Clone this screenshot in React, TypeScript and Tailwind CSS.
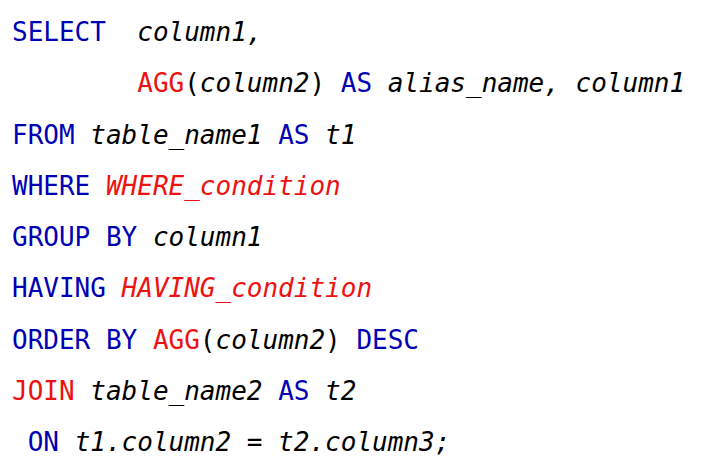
const K = ({ children }: { children: React.ReactNode }) => <span className="text-[#0000b4]">{children}</span>
const R = ({ children }: { children: React.ReactNode }) => <span className="text-[#ee1111]">{children}</span>
const I = ({ children }: { children: React.ReactNode }) => <span className="italic text-black">{children}</span>
const RI = ({ children }: { children: React.ReactNode }) => <span className="italic text-[#ee1111]">{children}</span>

export default function App() {
  return (
    <div className="w-[715px] h-[473px] bg-white overflow-hidden">
      <pre className="pl-[12px] pt-[7px] font-['DejaVu_Sans_Mono',monospace] text-[26px] leading-[51.25px] text-black">
        <div><K>SELECT</K>  <I>column1,</I></div>
        <div>        <R>AGG</R>(<I>column2</I>) <K>AS</K> <I>alias_name, column1</I></div>
        <div><K>FROM</K> <I>table_name1</I> <K>AS</K> <I>t1</I></div>
        <div><K>WHERE</K> <RI>WHERE_condition</RI></div>
        <div><K>GROUP BY</K> <I>column1</I></div>
        <div><K>HAVING</K> <RI>HAVING_condition</RI></div>
        <div><K>ORDER BY</K> <R>AGG</R>(<I>column2</I>) <K>DESC</K></div>
        <div><R>JOIN</R> <I>table_name2</I> <K>AS</K> <I>t2</I></div>
        <div> <K>ON</K> <I>t1.column2 = t2.column3;</I></div>
      </pre>
    </div>
  )
}
